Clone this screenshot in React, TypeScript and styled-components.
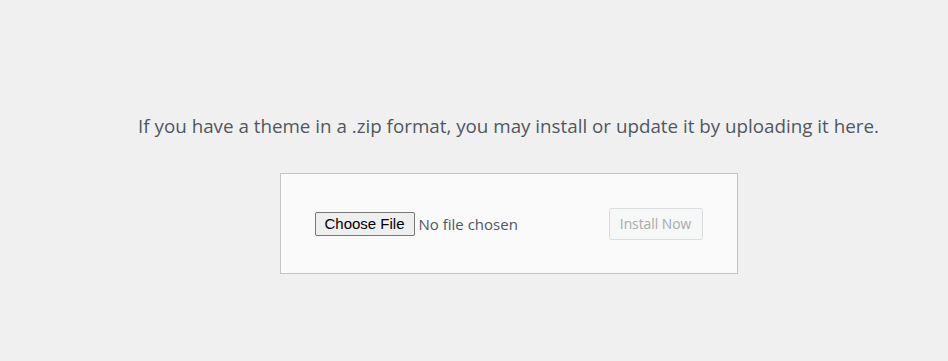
import styled, { createGlobalStyle } from "styled-components";

const GlobalStyle = createGlobalStyle`
    html, body {
        margin: 0;
        padding: 0;
        background: #f0f0f1;
    }
    body {
        font-family: "Open Sans", "Noto Sans", sans-serif;
        color: #50575e;
    }
`;

function App() {
    return (
        <Page>
            <GlobalStyle />
            <UploadArea>
                <Help>
                    If you have a theme in a .zip format, you may install or
                    update it by uploading it here.
                </Help>
                <UploadForm onSubmit={(e) => e.preventDefault()}>
                    <FileField>
                        <ChooseButton type="button">Choose File</ChooseButton>
                        <FileName>No file chosen</FileName>
                    </FileField>
                    <InstallButton type="submit" disabled>
                        Install Now
                    </InstallButton>
                </UploadForm>
            </UploadArea>
        </Page>
    );
}

const Page = styled.div`
    min-height: 361px;
    padding: 113px 0 0 69px;
    box-sizing: border-box;
`;
const UploadArea = styled.div`
    display: flex;
    flex-direction: column;
    align-items: center;
`;
const Help = styled.p`
    margin: 0;
    font-size: 18.8px;
    line-height: 27px;
    white-space: nowrap;
    color: #50575e;
`;
const UploadForm = styled.form`
    margin-top: 33px;
    width: 458px;
    height: 101px;
    box-sizing: border-box;
    display: flex;
    align-items: center;
    padding: 0 34px 0 34px;
    background: #fafafa;
    border: 1px solid #c3c4c7;
`;
const FileField = styled.div`
    display: flex;
    align-items: center;
    gap: 4px;
`;
const ChooseButton = styled.button`
    height: 24px;
    width: 100px;
    padding: 0;
    font-family: "Liberation Sans", Arial, sans-serif;
    font-size: 15px;
    color: #000;
    background: #efefef;
    border: 1px solid #767676;
    border-radius: 2px;
`;
const FileName = styled.span`
    font-size: 15px;
    color: #50575e;
`;
const InstallButton = styled.button`
    margin-left: auto;
    width: 94px;
    height: 32px;
    padding: 0;
    font-family: "Open Sans", "Noto Sans", sans-serif;
    font-size: 13.8px;
    color: #a7aaad;
    background: #f6f7f7;
    border: 1px solid #dcdcde;
    border-radius: 3px;
`;

export default App;
